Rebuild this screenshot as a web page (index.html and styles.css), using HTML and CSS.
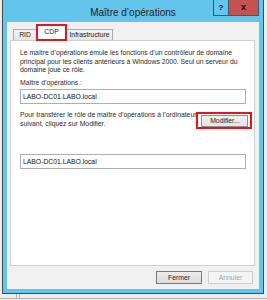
FILE: index.html
```html
<!DOCTYPE html>
<html lang="fr">
<head>
<meta charset="utf-8">
<title>Maître d'opérations</title>
<link rel="stylesheet" href="styles.css">
</head>
<body>
<div class="window">
  <div class="titlebar">
    <div class="title">Maître d’opérations</div>
    <div class="caps">
      <span class="cap help">?</span>
      <span class="cap close">x</span>
    </div>
  </div>
  <div class="client">
    <div class="tabs">
      <span class="tab">RID</span>
      <span class="tab active">CDP</span>
      <span class="tab">Infrastructure</span>
    </div>
    <div class="panel">
      <p class="text">Le maître d’opérations émule les fonctions d’un contrôleur de domaine<br>principal pour les clients antérieurs à Windows 2000. Seul un serveur du<br>domaine joue ce rôle.</p>
      <div class="label">Maître d’opérations :</div>
      <div class="field">LABO-DC01.LABO.local</div>
      <div class="row">
        <p class="text">Pour transférer le rôle de maître d’opérations à l’ordinateur<br>suivant, cliquez sur Modifier.</p>
        <span class="mark"><span class="btn modify">Modifier...</span></span>
      </div>
      <div class="field second">LABO-DC01.LABO.local</div>
    </div>
    <div class="footer">
      <span class="btn default">Fermer</span>
      <span class="btn disabled">Annuler</span>
    </div>
  </div>
</div>
<div class="desk">
  <span class="desk-frame"></span>
</div>
</body>
</html>
```
FILE: styles.css
```css
html, body {
  margin: 0;
  padding: 0;
}
body {
  width: 267px;
  height: 300px;
  overflow: hidden;
  background: #ececec;
  font-family: "Liberation Sans", Arial, sans-serif;
  color: #222;
}
.window {
  box-sizing: border-box;
  margin-left: 2px;
  width: 262px;
  height: 294px;
  border: 1px solid #4a4a4a;
  border-top: 0;
  background: #63c4ec;
  padding: 0 4px 4px;
  display: flex;
  flex-direction: column;
}
.titlebar {
  height: 22px;
  display: grid;
  grid-template-columns: 1fr auto 1fr;
}
.title {
  grid-column: 2;
  font-size: 10px;
  line-height: 10px;
  padding-top: 8px;
  color: #1e1e1e;
}
.caps {
  grid-column: 3;
  justify-self: end;
  display: flex;
  height: 16px;
}
.cap {
  box-sizing: border-box;
  height: 16px;
  border: 1px solid #3b5a6b;
  border-top: 0;
  font-size: 8px;
  font-weight: bold;
  line-height: 15px;
  text-align: center;
  color: #111;
}
.help {
  width: 16px;
}
.close {
  width: 31px;
  margin-left: -1px;
  background: #c75050;
  font-size: 9px;
}
.client {
  flex: 1;
  background: #f0f0f0;
  display: flex;
  flex-direction: column;
}
.tabs {
  height: 18px;
  padding-left: 6px;
  display: flex;
  align-items: flex-end;
}
.tab {
  box-sizing: border-box;
  height: 11px;
  border: 1px solid #adadad;
  border-bottom: 0;
  background: linear-gradient(#f2f2f2, #e6e6e6);
  font-size: 6.8px;
  line-height: 10px;
  text-align: center;
  color: #222;
}
.tab:nth-child(1) {
  width: 24px;
}
.tab:nth-child(3) {
  width: 47px;
  margin-left: -1px;
}
.tab.active {
  position: relative;
  top: 1px;
  z-index: 2;
  width: 31px;
  height: 17px;
  margin-left: -1px;
  border: 2px solid #e3151f;
  background: #fff;
  line-height: 10px;
  padding-top: 1px;
}
.panel {
  box-sizing: border-box;
  height: 226px;
  margin: 0 4px 0 3px;
  border: 1px solid #cfcfcf;
  background: #fff;
  padding: 8px 8px 0 9px;
  font-size: 6.8px;
}
.text {
  margin: 0;
  line-height: 8.5px;
  color: #2a2a2a;
  white-space: nowrap;
}
.label {
  margin-top: 4px;
  line-height: 8.5px;
  color: #2a2a2a;
}
.field {
  box-sizing: border-box;
  margin-top: 2px;
  height: 15px;
  border: 1px solid #abadb3;
  padding-left: 2px;
  line-height: 13px;
  color: #111;
}
.field.second {
  margin-top: 25px;
}
.row {
  margin-top: 7px;
  display: flex;
  justify-content: space-between;
  align-items: flex-start;
}
.mark {
  margin-top: 1px;
  margin-right: -4px;
  border: 2px solid #e3151f;
  padding: 1px 2px 0 3px;
  display: flex;
}
.btn {
  box-sizing: border-box;
  display: inline-block;
  height: 13px;
  border: 1px solid #acacac;
  background: linear-gradient(#f0f0f0, #e5e5e5);
  font-size: 6.8px;
  line-height: 11px;
  text-align: center;
  color: #222;
}
.modify {
  width: 47px;
  height: 12px;
  line-height: 10px;
  border-color: #8f8f8f;
}
.footer {
  margin-top: 5px;
  padding-right: 6px;
  display: flex;
  justify-content: flex-end;
  gap: 6px;
}
.default {
  width: 46px;
  border-color: #7a7a7a;
  background: linear-gradient(#ececec, #dcdcdc);
}
.disabled {
  width: 45px;
  border-color: #cdcdcd;
  background: #f4f4f4;
  color: #a3a3a3;
}
.desk {
  height: 4px;
  border-bottom: 1px solid #b4b4b4;
  display: flex;
}
.desk-frame {
  margin-left: 16px;
  width: 2px;
  border-left: 1px solid #b4b4b4;
  border-right: 1px solid #b4b4b4;
}
```
